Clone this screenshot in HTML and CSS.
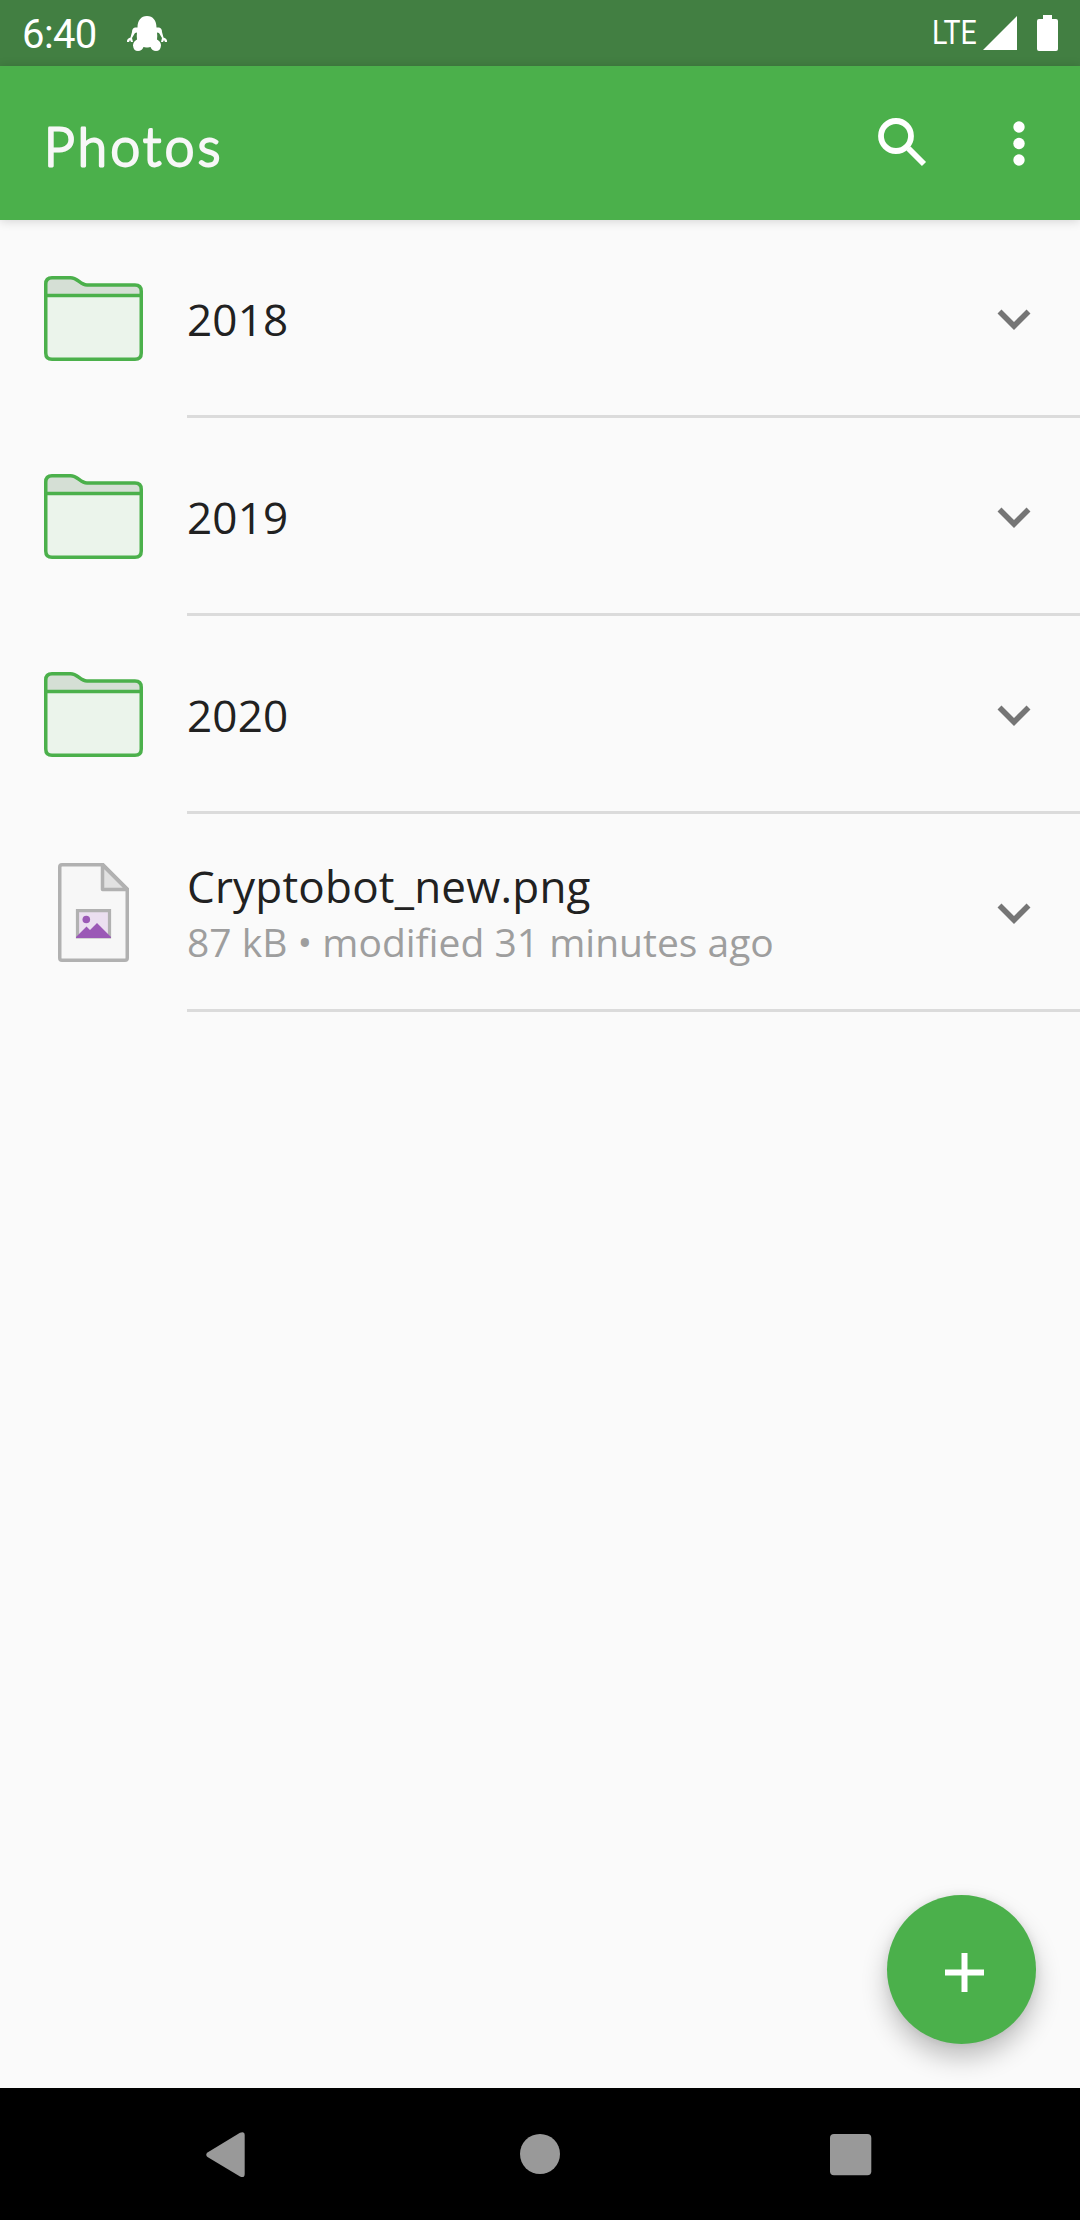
FILE: index.html
```
<!DOCTYPE html>
<html lang="en">
<head>
<meta charset="utf-8">
<title>Photos</title>
<link rel="stylesheet" href="styles.css">
</head>
<body>
<svg class="defs" width="0" height="0" aria-hidden="true">
  <symbol id="folder" viewBox="0 0 99 85">
    <path d="M1.5 19V7.500Q1.500 1.500 7.500 1.500H27C34 1.500 36 9 43 9H91.500Q97.500 9 97.500 15V19Z" fill="#d5dfd5"/>
    <path d="M1.500 19H97.500V77.500Q97.500 83.500 91.500 83.500H7.500Q1.500 83.500 1.500 77.500Z" fill="#ebf4eb"/>
    <path d="M1.750 19.500H97.250M1.750 8Q1.750 1.750 8 1.750H26.500C34 1.750 36 9 43 9H91Q97.250 9 97.250 15.250V77Q97.250 83.250 91 83.250H8Q1.750 83.250 1.750 77Z" fill="none" stroke="#4bb04b" stroke-width="3.500"/>
  </symbol>
  <symbol id="chevron" viewBox="0 0 34 21">
    <path d="M2.500 2.500 17 17 31.500 2.500" fill="none" stroke="#757575" stroke-width="5.600"/>
  </symbol>
</svg>
<div class="screen">
  <header class="status">
    <span class="clock">6:40</span>
    <svg class="robot" width="42" height="36" viewBox="0 0 42 36" fill="#fff">
      <path d="M21 0C27 0 30.500 4.500 30.500 11.500H33Q36 12 36 16L37.500 21.500Q41.500 22.500 41 26H39L38 24L37 26H35L36 22L33 17L31 16.500Q31.500 20 31 23.500Q35 25.500 35 29.500Q34.500 35 30 35Q26 35 24.500 31L22 31.500H20L17.500 31Q16 35 12 35Q7.500 35 7 29.500Q7 25.500 11 23.500Q10.500 20 11 16.500L9 17L6 22L7 26H5L4 24L3 26H1Q.5 22.500 4.500 21.500L6 16Q6 12 9 11.500H11.500C11.500 4.500 15 0 21 0Z"/>
    </svg>
    <span class="network">LTE</span>
    <svg class="signal" width="34" height="34" viewBox="0 0 34 34"><path d="M0 34H34V0Z" fill="#fff"/></svg>
    <svg class="battery" width="21" height="36" viewBox="0 0 21 36"><path d="M6 0H15V4H19Q21 4 21 6V34Q21 36 19 36H2Q0 36 0 34V6Q0 4 2 4H6Z" fill="#fff"/></svg>
  </header>
  <div class="appbar">
    <h1 class="title"><svg width="200" height="70" viewBox="0 0 200 70"><text class="title-text" x="0" y="51">Photos</text></svg></h1>
    <svg class="search" width="49" height="49" viewBox="0 0 49 49" fill="none" stroke="#fff"><circle cx="18" cy="18" r="15" stroke-width="5.800"/><path d="M30.500 30.500 46 46" stroke-width="5.800"/><path d="M28 28 33 33" stroke-width="3"/></svg>
    <svg class="more" width="12" height="45" viewBox="0 0 12 45" fill="#fff"><circle cx="6" cy="6" r="5.700"/><circle cx="6" cy="22.500" r="5.700"/><circle cx="6" cy="39" r="5.700"/></svg>
  </div>
  <main class="list">
    <div class="row"><div class="thumb"><svg width="99" height="85"><use href="#folder"/></svg></div><div class="info"><div class="text"><div class="name">2018</div></div><svg class="chevron" width="34" height="21"><use href="#chevron"/></svg></div></div>
    <div class="row"><div class="thumb"><svg width="99" height="85"><use href="#folder"/></svg></div><div class="info"><div class="text"><div class="name">2019</div></div><svg class="chevron" width="34" height="21"><use href="#chevron"/></svg></div></div>
    <div class="row"><div class="thumb"><svg width="99" height="85"><use href="#folder"/></svg></div><div class="info"><div class="text"><div class="name">2020</div></div><svg class="chevron" width="34" height="21"><use href="#chevron"/></svg></div></div>
    <div class="row">
      <div class="thumb file">
        <svg width="71" height="99" viewBox="0 0 71 99">
          <path d="M4 1.750H45L69.250 26V95Q69.250 97.250 67 97.250H4Q1.750 97.250 1.750 95V4Q1.750 1.750 4 1.750Z" fill="#f7f7f7" stroke="#b1b1b1" stroke-width="3.500"/>
          <path d="M44.500 2V26.500H69Z" fill="#e1e1e1" stroke="#b1b1b1" stroke-width="3.500" stroke-linejoin="round"/>
          <path d="M19.500 74V47.700H51.500V74Z" fill="#ebdff0" stroke="#b1b1b1" stroke-width="3.200"/>
          <circle cx="28.300" cy="56.500" r="3.800" fill="#9b59b6"/>
          <path d="M18 75V74L28.500 63.500 32 67 39 60 53 74V75Z" fill="#9b59b6"/>
        </svg>
      </div>
      <div class="info"><div class="text"><div class="name">Cryptobot_new.png</div><div class="meta">87 kB • modified 31 minutes ago</div></div><svg class="chevron" width="34" height="21"><use href="#chevron"/></svg></div>
    </div>
  </main>
  <div class="fab"><svg width="39" height="39" viewBox="0 0 39 39"><path d="M0 19.500H39M19.500 0V39" stroke="#fff" stroke-width="6"/></svg></div>
  <nav class="navbar">
    <svg class="back" width="39" height="46" viewBox="0 0 39 46"><path d="M34 .8Q38.700 -1 38.700 3.500V42Q38.700 46.500 34 44.500L1.500 25Q-1 22.700 1.500 20.500Z" fill="#999"/></svg>
    <svg class="home" width="40" height="40"><circle cx="20" cy="20" r="20" fill="#999"/></svg>
    <svg class="recent" width="42" height="42"><rect width="41.300" height="41.300" rx="4" fill="#999"/></svg>
  </nav>
</div>
</body>
</html>
```
FILE: styles.css
```
* { box-sizing: border-box; }
body { margin: 0; background: #fafafa; font-family: "Open Sans", "Noto Sans", sans-serif; }
svg { display: block; flex: none; }
.defs { position: absolute; }
.screen { position: relative; width: 1080px; height: 2220px; display: flex; flex-direction: column; overflow: hidden; }
.status { height: 66px; flex: none; display: flex; align-items: flex-start; padding: 0 22px; background: #427f42; color: #fff; font-family: Roboto, sans-serif; }
.clock { width: 104px; margin-top: 11px; font-size: 40px; line-height: 47px; letter-spacing: -.6px; }
.robot { margin-top: 16px; }
.network { width: 46px; margin: 12px 5px 0 auto; font-size: 34px; line-height: 40px; transform: scaleX(.84); transform-origin: 0 0; }
.signal { margin-top: 16px; }
.battery { margin: 15px 0 0 20px; }
.appbar { position: relative; z-index: 1; height: 154px; flex: none; display: flex; align-items: flex-start; padding: 0 55px 0 44px; background: #4bb04b; box-shadow: 0 1px 10px rgba(0, 0, 0, .16); }
.title { margin: 49px auto 0 0; }
.title-text { font-family: Lato, sans-serif; font-size: 53px; font-weight: 300; letter-spacing: 3.5px; fill: #f7f7f7; stroke: #f7f7f7; stroke-width: 2.8; stroke-linejoin: round; }
.search { margin-top: 52px; }
.more { margin: 55px 0 0 86px; }
.list { flex: 1; }
.row { height: 198px; display: flex; }
.thumb { width: 187px; padding: 56px 0 0 44px; }
.thumb.file { padding: 49px 0 0 58px; }
.info { flex: 1; display: flex; align-items: center; padding-right: 49px; border-bottom: 3px solid #dbdbdb; }
.text { flex: 1; padding-top: 3px; }
.name { font-size: 44px; line-height: 56px; letter-spacing: .2px; color: #212121; }
.meta { font-size: 39px; line-height: 55px; color: #9e9e9e; }
.chevron { margin-top: 3px; }
.fab { position: absolute; left: 887px; top: 1895px; width: 149px; height: 149px; border-radius: 50%; background: #4bb04b; display: flex; align-items: center; justify-content: center; padding: 5px 0 0 5px; box-shadow: 0 14px 26px rgba(0, 0, 0, .24), 0 0 10px rgba(0, 0, 0, .08); }
.navbar { position: relative; height: 132px; flex: none; display: flex; align-items: flex-start; padding: 0 208px 0 206px; background: #000; justify-content: space-between; }
.back { margin-top: 44px; }
.home { margin: 46px 0 0 5px; }
.recent { margin-top: 46px; }
```
